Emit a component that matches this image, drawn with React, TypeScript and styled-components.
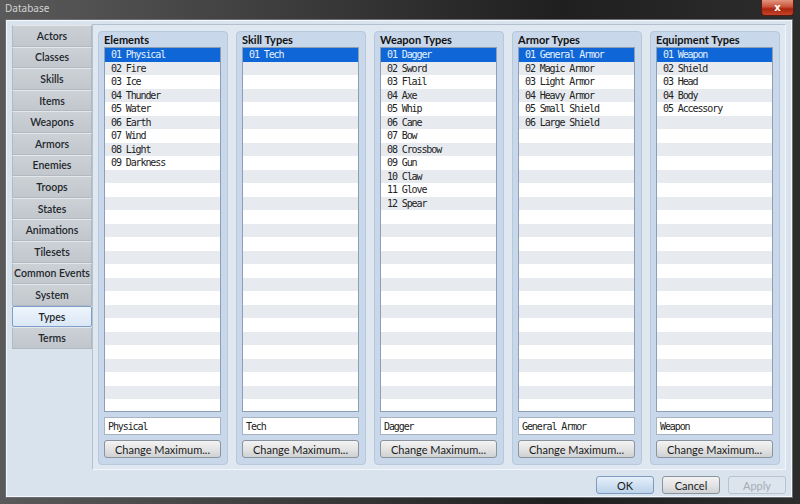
import React from "react";
import styled, { createGlobalStyle } from "styled-components";

const GlobalStyle = createGlobalStyle`
  html, body {
    margin: 0;
    padding: 0;
    background: #1c1c1c;
  }
  body {
    font-family: Lato, "Noto Sans", sans-serif;
  }
`;

const Frame = styled.div`
  width: 800px;
  height: 504px;
  box-sizing: border-box;
  display: flex;
  flex-direction: column;
  background: linear-gradient(90deg, #5a5a5a 0%, #3d3d3d 35%, #1f1f1f 70%, #2d2d2d 100%);
  padding: 0 8px 7px 6px;
  overflow: hidden;
`;

const TitleBar = styled.div`
  height: 20px;
  display: flex;
  align-items: center;
  justify-content: space-between;
`;

const TitleText = styled.span`
  font-family: "Noto Sans", sans-serif;
  font-size: 10px;
  color: #d2d2d2;
  margin-left: -1px;
  margin-top: -4px;
`;

const CloseButton = styled.div`
  width: 31px;
  height: 15px;
  margin-top: -5px;
  margin-right: -2px;
  border: 1px solid #5b1a12;
  border-top: none;
  border-radius: 0 0 4px 4px;
  background: linear-gradient(180deg, #e2957f 0%, #c9533b 45%, #a9240f 60%, #c4452a 100%);
  display: flex;
  align-items: center;
  justify-content: center;
  color: #fff;
  font-size: 10px;
  font-weight: 700;
  font-family: "DejaVu Sans", sans-serif;
`;

const Client = styled.div`
  flex: 1;
  box-sizing: border-box;
  background: #d9e3ee;
  border: 1px solid #f4f7fb;
  outline: 1px solid #6b6f74;
  display: flex;
  flex-direction: column;
  padding: 3px 5px 0 5px;
`;

const Body = styled.div`
  display: flex;
  height: 446px;
`;

const Sidebar = styled.div`
  width: 81px;
  padding-top: 1px;
  display: flex;
  flex-direction: column;
`;

const Tab = styled.div<{ $active?: boolean }>`
  height: 21.6px;
  box-sizing: border-box;
  display: flex;
  align-items: center;
  justify-content: center;
  white-space: nowrap;
  font-family: Lato, "Noto Sans", sans-serif;
  font-weight: 600;
  font-size: 10.5px;
  color: #23272c;
  border: 1px solid ${({ $active }) => ($active ? "#7d9fc8" : "#b3b9c0")};
  border-top-color: ${({ $active }) => ($active ? "#7d9fc8" : "#e3e6ea")};
  background: ${({ $active }) =>
    $active
      ? "linear-gradient(180deg, #eef5fc 0%, #dae7f5 100%)"
      : "linear-gradient(180deg, #ccd1d6 0%, #c2c7cd 100%)"};
  border-radius: ${({ $active }) => ($active ? "2px" : "0")};
`;

const Content = styled.div`
  flex: 1;
  box-sizing: border-box;
  border: 1px solid #b4c0cd;
  border-right-color: #f2f5f9;
  border-bottom-color: #f2f5f9;
  background: #dfe7f0;
  display: flex;
  gap: 8px;
  padding: 6px 5px 4px 5px;
`;

const Group = styled.div`
  width: 130px;
  box-sizing: border-box;
  background: #c8d7e9;
  border-radius: 4px;
  border: 1px solid #b7c8dc;
  display: flex;
  flex-direction: column;
  padding: 0 6px 6px 5px;
`;

const GroupTitle = styled.div`
  height: 15px;
  display: flex;
  align-items: center;
  font-family: Lato, "Noto Sans", sans-serif;
  font-size: 11px;
  font-weight: 700;
  color: #111;
`;

const ListBox = styled.div`
  height: 365px;
  box-sizing: border-box;
  border: 1px solid #8c9fb5;
  background: #fff;
  overflow: hidden;
`;

const Row = styled.div<{ $alt: boolean; $selected: boolean }>`
  height: 13.5px;
  line-height: 13.5px;
  padding-left: 6px;
  font-family: "DejaVu Sans Mono", "Liberation Mono", monospace;
  font-size: 10px;
  letter-spacing: -1.1px;
  white-space: pre;
  color: ${({ $selected }) => ($selected ? "#e6f2ff" : "#222")};
  background: ${({ $alt, $selected }) =>
    $selected ? "#0f66d6" : $alt ? "#e7ebf0" : "#ffffff"};
`;

const NameField = styled.div`
  margin-top: 5px;
  height: 18px;
  box-sizing: border-box;
  background: #fff;
  border: 1px solid #a7b3c0;
  font-family: "DejaVu Sans Mono", "Liberation Mono", monospace;
  font-size: 10px;
  letter-spacing: -1.1px;
  color: #222;
  display: flex;
  align-items: center;
  padding-left: 3px;
`;

const Button = styled.div<{ $primary?: boolean; $disabled?: boolean }>`
  height: 18px;
  box-sizing: border-box;
  display: flex;
  align-items: center;
  justify-content: center;
  font-family: Lato, "Noto Sans", sans-serif;
  font-size: 11px;
  border-radius: 3px;
  color: ${({ $disabled }) => ($disabled ? "#a6adb5" : "#1a1a1a")};
  border: 1px solid ${({ $primary, $disabled }) =>
    $primary ? "#7e9cc0" : $disabled ? "#b9c3ce" : "#8a949e"};
  background: ${({ $primary, $disabled }) =>
    $primary
      ? "linear-gradient(180deg, #e6f0fa 0%, #cfe0f2 50%, #bcd3ea 100%)"
      : $disabled
      ? "#dce4ed"
      : "linear-gradient(180deg, #f3f3f3 0%, #e4e4e4 50%, #cfd1d3 100%)"};
`;

const MaxButton = styled(Button)`
  margin-top: 5px;
`;

const Footer = styled.div`
  flex: 1;
  display: flex;
  justify-content: flex-end;
  align-items: flex-start;
  gap: 8px;
  padding-top: 6px;
`;

const FooterButton = styled(Button)`
  width: 58px;
`;

const tabs = [
  "Actors",
  "Classes",
  "Skills",
  "Items",
  "Weapons",
  "Armors",
  "Enemies",
  "Troops",
  "States",
  "Animations",
  "Tilesets",
  "Common Events",
  "System",
  "Types",
  "Terms",
];

const groups = [
  {
    title: "Elements",
    items: ["Physical", "Fire", "Ice", "Thunder", "Water", "Earth", "Wind", "Light", "Darkness"],
  },
  { title: "Skill Types", items: ["Tech"] },
  {
    title: "Weapon Types",
    items: ["Dagger", "Sword", "Flail", "Axe", "Whip", "Cane", "Bow", "Crossbow", "Gun", "Claw", "Glove", "Spear"],
  },
  {
    title: "Armor Types",
    items: ["General Armor", "Magic Armor", "Light Armor", "Heavy Armor", "Small Shield", "Large Shield"],
  },
  { title: "Equipment Types", items: ["Weapon", "Shield", "Head", "Body", "Accessory"] },
];

const ROWS = 27;

const TypeGroup: React.FC<{ title: string; items: string[] }> = ({ title, items }) => {
  const rows = Array.from({ length: ROWS }, (_, i) =>
    i < items.length ? `${String(i + 1).padStart(2, "0")} ${items[i]}` : ""
  );
  return (
    <Group>
      <GroupTitle>{title}</GroupTitle>
      <ListBox>
        {rows.map((text, i) => (
          <Row key={i} $alt={i % 2 === 1} $selected={i === 0}>
            {text}
          </Row>
        ))}
      </ListBox>
      <NameField>{items[0]}</NameField>
      <MaxButton>Change Maximum...</MaxButton>
    </Group>
  );
};

const App: React.FC = () => {
  return (
    <>
      <GlobalStyle />
      <Frame>
        <TitleBar>
          <TitleText>Database</TitleText>
          <CloseButton>x</CloseButton>
        </TitleBar>
        <Client>
          <Body>
            <Sidebar>
              {tabs.map((t) => (
                <Tab key={t} $active={t === "Types"}>
                  {t}
                </Tab>
              ))}
            </Sidebar>
            <Content>
              {groups.map((g) => (
                <TypeGroup key={g.title} title={g.title} items={g.items} />
              ))}
            </Content>
          </Body>
          <Footer>
            <FooterButton $primary>OK</FooterButton>
            <FooterButton>Cancel</FooterButton>
            <FooterButton $disabled>Apply</FooterButton>
          </Footer>
        </Client>
      </Frame>
    </>
  );
};

export default App;
